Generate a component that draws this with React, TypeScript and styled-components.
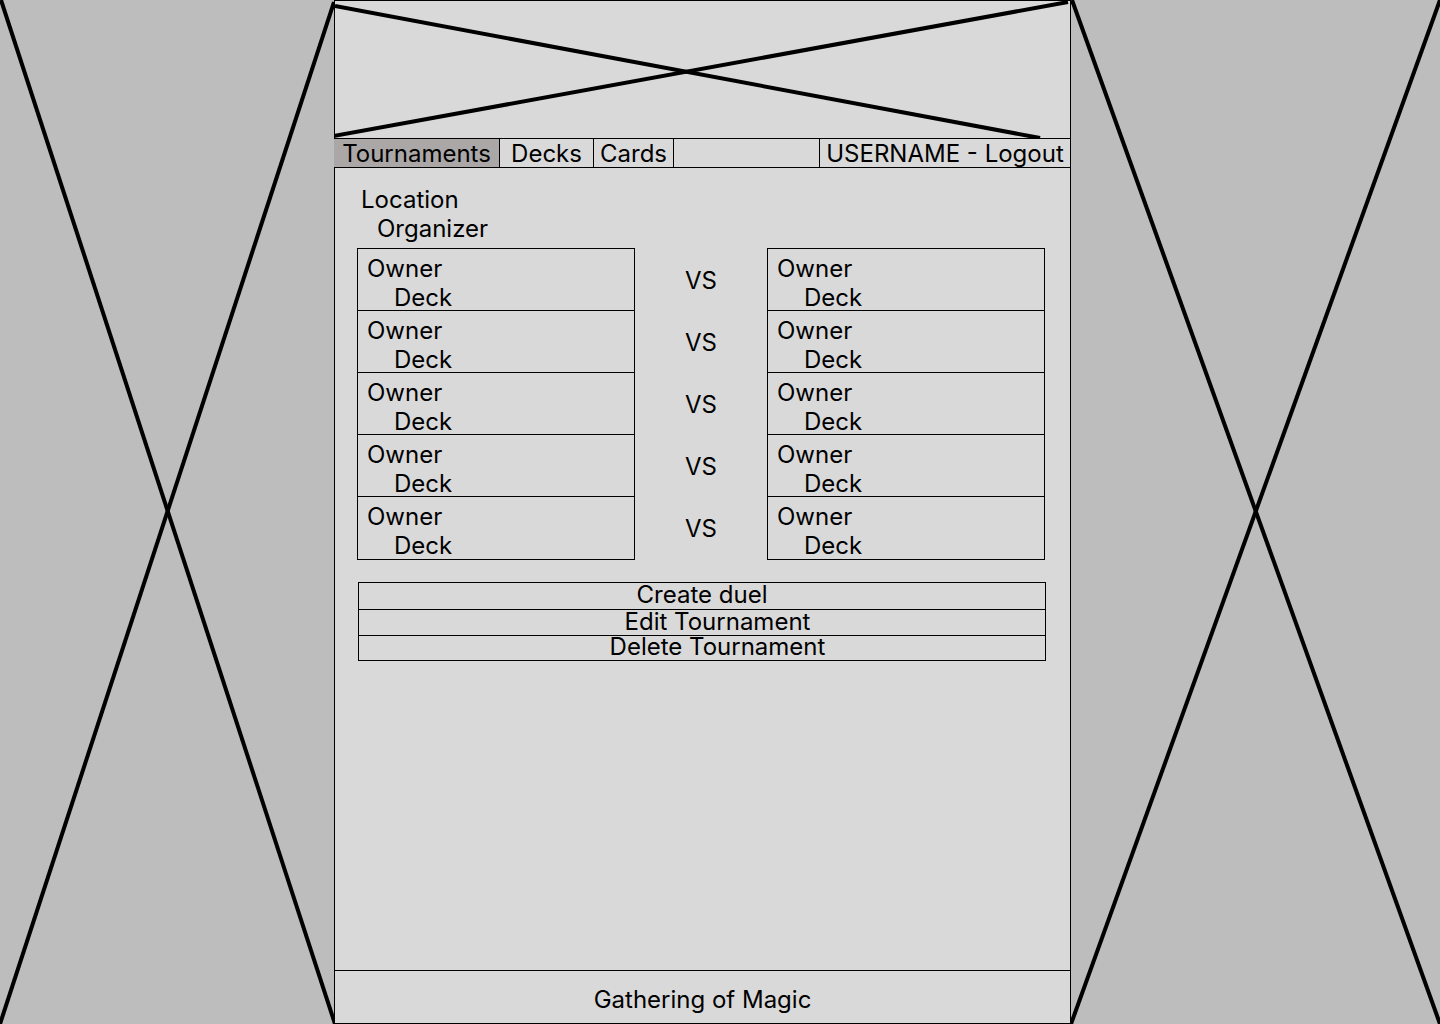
import React from 'react';
import { createGlobalStyle, styled } from 'styled-components';

const GlobalStyle = createGlobalStyle`
  html, body {
    margin: 0;
    padding: 0;
    background: #bdbdbd;
    font-family: Inter, "Noto Sans", "Liberation Sans", sans-serif;
    color: #000;
  }
  * {
    box-sizing: border-box;
  }
`;

const duels = [0, 1, 2, 3, 4];

const navItems = [
  { label: 'Tournaments', width: 166, active: true },
  { label: 'Decks', width: 94, active: false },
  { label: 'Cards', width: 80, active: false },
  { label: '', width: 146, active: false },
];

const buttons = [
  { label: 'Create duel', shift: 0 },
  { label: 'Edit Tournament', shift: 31 },
  { label: 'Delete Tournament', shift: 31 },
];

// placeholder cross, drawn in px of its box
const Cross = ({ w, h, lines }: { w: number; h: number; lines: number[][] }) => (
  <svg width="100%" height="100%" viewBox={`0 0 ${w} ${h}`} preserveAspectRatio="none">
    {lines.map((l, i) => (
      <line key={i} x1={l[0]} y1={l[1]} x2={l[2]} y2={l[3]} stroke="#000" strokeWidth={4} />
    ))}
  </svg>
);

const App = () => {
  return (
    <Page>
      <GlobalStyle />
      <SidePanel>
        <Cross
          w={334}
          h={1024}
          lines={[
            [1, 0, 335, 1024],
            [334, 2, 0, 1024],
          ]}
        />
      </SidePanel>
      <Main>
        <Banner>
          <Cross
            w={736}
            h={137}
            lines={[
              [0, 5, 706, 137],
              [734, 1, -1, 135],
            ]}
          />
        </Banner>
        <Nav>
          {navItems.map((item, i) => (
            <NavItem key={i} $width={item.width} $active={item.active}>
              {item.label}
            </NavItem>
          ))}
          <NavUser>USERNAME - Logout</NavUser>
        </Nav>
        <Content>
          <Info>
            <div>Location</div>
            <Indented>Organizer</Indented>
          </Info>
          <Duels>
            {duels.map((d) => (
              <DuelRow key={d}>
                <Slot>
                  <div>Owner</div>
                  <DeckName>Deck</DeckName>
                </Slot>
                <Versus>VS</Versus>
                <Slot>
                  <div>Owner</div>
                  <DeckName>Deck</DeckName>
                </Slot>
              </DuelRow>
            ))}
          </Duels>
          <Actions>
            {buttons.map((b) => (
              <ActionButton key={b.label} type="button" $shift={b.shift}>
                {b.label}
              </ActionButton>
            ))}
          </Actions>
        </Content>
        <Footer>Gathering of Magic</Footer>
      </Main>
      <SidePanel>
        <Cross
          w={369}
          h={1024}
          lines={[
            [1, 0, 369, 1024],
            [369, 0, 0, 1024],
          ]}
        />
      </SidePanel>
    </Page>
  );
};

export default App;

const Page = styled.div`
  display: grid;
  grid-template-columns: 334px 737px 1fr;
  height: 1024px;
  overflow: hidden;
`;

const SidePanel = styled.div`
  height: 1024px;
  background: #bdbdbd;
  & svg {
    display: block;
  }
`;

const Main = styled.div`
  display: flex;
  flex-direction: column;
  height: 1024px;
  background: #d9d9d9;
  border: 1px solid #000;
`;

const Banner = styled.div`
  height: 137px;
  & svg {
    display: block;
  }
`;

const Nav = styled.div`
  display: flex;
  height: 30px;
  border-top: 1px solid #000;
  border-bottom: 1px solid #000;
  margin-left: -1px;
  font-size: 24px;
  line-height: 27px;
`;

const NavItem = styled.div<{ $width: number; $active: boolean }>`
  width: ${(p) => p.$width}px;
  padding-top: 1px;
  border-right: 1px solid #000;
  background: ${(p) => (p.$active ? '#aba7a7' : 'transparent')};
  text-align: center;
  white-space: nowrap;
`;

const NavUser = styled.div`
  flex: 1;
  padding-top: 1px;
  text-align: center;
  white-space: nowrap;
`;

const Content = styled.div`
  flex: 1;
  padding: 17px 0 0 22px;
  font-size: 24px;
  line-height: 29px;
`;

const Info = styled.div`
  padding-left: 4px;
  margin-bottom: 5px;
`;

const Indented = styled.div`
  padding-left: 16px;
`;

const Duels = styled.div`
  display: flex;
  flex-direction: column;
`;

const DuelRow = styled.div`
  display: grid;
  grid-template-columns: 278px 132px 278px;
  & + & {
    margin-top: -1px;
  }
  &:last-child > div {
    height: 64px;
  }
`;

const Slot = styled.div`
  height: 63px;
  border: 1px solid #000;
  padding: 5px 0 0 9px;
  white-space: nowrap;
`;

const DeckName = styled.div`
  padding-left: 27px;
`;

const Versus = styled.div`
  display: flex;
  align-items: center;
  justify-content: center;
  padding-top: 1px;
`;

const Actions = styled.div`
  display: flex;
  flex-direction: column;
  width: 688px;
  margin: 22px 0 0 1px;
  border: 1px solid #000;
`;

const ActionButton = styled.button<{ $shift: number }>`
  display: block;
  height: 26px;
  padding: 0 0 2px ${(p) => p.$shift}px;
  border: none;
  background: transparent;
  font-family: inherit;
  font-size: 24px;
  line-height: 22px;
  color: #000;
  text-align: center;
  white-space: nowrap;
  & + & {
    border-top: 1px solid #000;
  }
  &:last-child {
    height: 25px;
  }
`;

const Footer = styled.div`
  height: 53px;
  border-top: 1px solid #000;
  font-size: 24px;
  line-height: 58px;
  text-align: center;
`;
